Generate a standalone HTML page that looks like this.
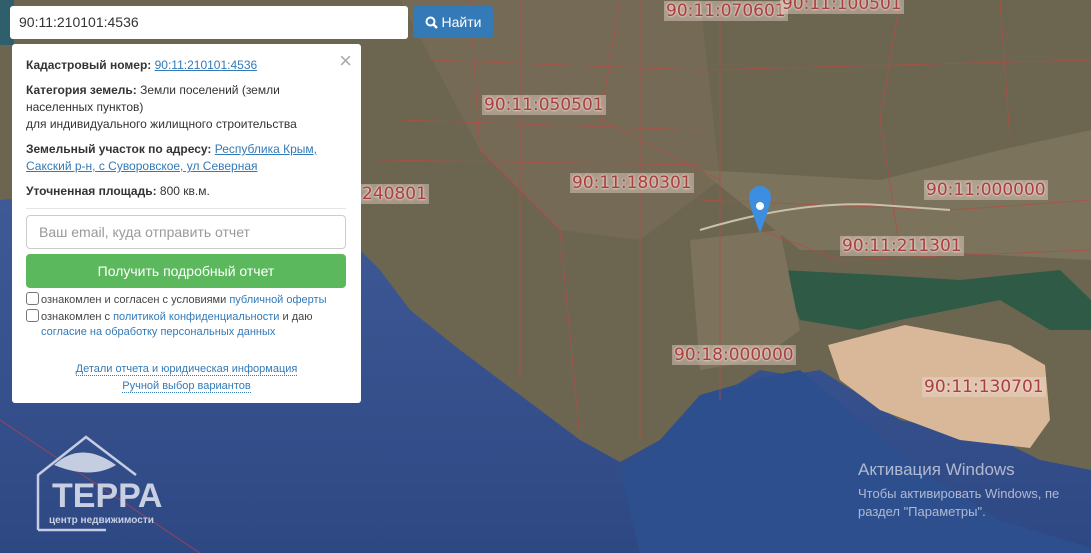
<!DOCTYPE html>
<html><head><meta charset="utf-8"><style>
*{box-sizing:border-box}
body{margin:0;width:1091px;height:553px;overflow:hidden;position:relative;font-family:"Liberation Sans",Arial,sans-serif;background:#3f5b97}
svg.bg{position:absolute;left:0;top:0}
.lbl{position:absolute;font-size:17px;color:#a8403f;font-family:"DejaVu Sans","Liberation Sans",sans-serif;text-shadow:0 0 2px #f0d8d0,0 0 3px #f0d8d0;background:rgba(235,215,205,.45);padding:0 2px;line-height:20px}
.search{position:absolute;left:10px;top:6px;width:398px;height:33px;background:#fff;border-radius:3px;font-size:14px;color:#333;padding:8px 9px}
.btn{position:absolute;left:413px;top:6px;width:80px;height:32px;background:#337ab7;border-radius:3px;color:#fff;font-size:14px;display:flex;align-items:center;justify-content:center;gap:4px}
.panel{position:absolute;left:12px;top:44px;width:349px;height:359px;background:#fff;border-radius:3px;font-size:12px;color:#333;padding:0 14px}
.panel p{margin:0;line-height:17px}
a{color:#337ab7;text-decoration:underline}
.close{position:absolute;right:9px;top:4px;font-size:22px;color:#aaa;font-weight:300}
.email{position:absolute;left:14px;top:171px;width:320px;height:34px;border:1px solid #ccc;border-radius:4px;font-size:14px;color:#999;padding:8px 12px}
.green{position:absolute;left:14px;top:210px;width:320px;height:34px;background:#5cb85c;border-radius:4px;color:#fff;font-size:14px;text-align:center;line-height:34px}
.cb{display:inline-block;width:13px;height:13px;border:1px solid #777;border-radius:3px;vertical-align:-2px;margin-right:2px}
.sm{font-size:11px;color:#444;position:absolute;left:14px}
.sm span{color:#337ab7}
.dl{position:absolute;width:100%;left:0;text-align:center;font-size:11px}
.dl span{color:#337ab7;border-bottom:1px dotted #337ab7}
</style></head><body>
<svg class="bg" width="1091" height="553" viewBox="0 0 1091 553">
<defs><linearGradient id="sea" x1="0" y1="0" x2="0" y2="1"><stop offset="0" stop-color="#4863a0"/><stop offset="1" stop-color="#2e4884"/></linearGradient></defs>
<rect width="1091" height="553" fill="url(#sea)"/>
<polygon fill="#6c6550" points="0,0 1091,0 1091,470 1040,460 1000,440 900,420 820,370 790,375 760,370 720,395 690,410 660,440 620,462 580,440 520,395 460,350 410,310 380,270 340,230 260,200 150,190 60,195 0,200"/>
<polygon fill="#756a55" points="400,0 700,0 720,180 640,240 560,230 480,150"/>
<polygon fill="#7b735b" points="700,170 880,180 1000,150 1091,130 1091,260 900,250 800,250"/>
<polygon fill="#2f5a45" points="780,270 880,275 960,280 1060,270 1091,300 1091,330 1050,330 1000,300 900,320 860,330 800,320"/>
<polygon fill="#7d735c" points="690,240 780,230 800,330 760,360 700,370"/>
<polygon fill="#d8b898" points="828,345 905,325 1010,345 1045,365 1050,420 1030,448 960,440 880,410 840,380"/>
<polygon fill="#2d4f8d" points="700,395 760,378 800,370 860,420 920,470 1000,520 1091,548 1091,553 640,553 620,470 660,440"/>
<rect x="0" y="0" width="14" height="45" fill="#2f5f6a"/>
<g stroke="#b84a45" stroke-width="1" fill="none" opacity=".7">
<path d="M470 0 L480 150 L560 230 M620 0 L600 120 L720 180 M900 0 L880 120 L900 250 M1000 0 L1010 140 M430 60 L700 70 L1091 60 M400 120 L700 130 M700 200 L950 210 L1091 200 M720 0 L720 400 M760 230 L840 260 L1091 250 M380 160 L700 165 M520 0 L520 380 M640 0 L640 440 M560 230 L580 440"/>
<path d="M0 420 L200 553" stroke="#c04048"/>
</g>
<path d="M700 230 Q800 200 880 205 L950 210" stroke="#c8c0a8" stroke-width="2" fill="none"/>
<path d="M749 197 a11 11 0 0 1 22 0 q0 8 -11 36 q-11 -28 -11 -36z" fill="#3c8ee0"/>
<circle cx="760" cy="206" r="4" fill="#fff"/>
</svg>
<div class="lbl" style="left:664px;top:1px">90:11:070601</div>
<div class="lbl" style="left:780px;top:-6px">90:11:100501</div>
<div class="lbl" style="left:482px;top:95px">90:11:050501</div>
<div class="lbl" style="left:570px;top:173px">90:11:180301</div>
<div class="lbl" style="left:360px;top:184px">240801</div>
<div class="lbl" style="left:924px;top:180px">90:11:000000</div>
<div class="lbl" style="left:840px;top:236px">90:11:211301</div>
<div class="lbl" style="left:672px;top:345px">90:18:000000</div>
<div class="lbl" style="left:922px;top:377px">90:11:130701</div>
<div style="position:absolute;left:858px;top:460px;color:rgba(230,230,240,.7);font-size:17px">Активация Windows</div>
<div style="position:absolute;left:858px;top:485px;color:rgba(230,230,240,.7);font-size:13px;line-height:18px">Чтобы активировать Windows, пе<br>раздел "Параметры".</div>
<svg style="position:absolute;left:36px;top:435px" width="145" height="100" viewBox="0 0 145 100">
<path d="M2 95 V40 L50 2 L100 40" stroke="#c5cde0" stroke-width="2.5" fill="none"/>
<path d="M2 95 H70" stroke="#c5cde0" stroke-width="2.5"/>
<path d="M18 30 Q45 5 80 30 Q55 45 18 30z" fill="#c5cde0"/>
<text x="16" y="72" font-family="Liberation Sans" font-weight="bold" font-size="34" fill="#c8d0e2">ТЕРРА</text>
<text x="13" y="88" font-family="Liberation Sans" font-weight="bold" font-size="10" fill="#c8d0e2">центр недвижимости</text>
</svg>
<div class="search">90:11:210101:4536</div>
<div class="btn"><svg width="13" height="13" viewBox="0 0 13 13"><circle cx="5.5" cy="5.5" r="4" stroke="#fff" stroke-width="2" fill="none"/><path d="M8.5 8.5 L12 12" stroke="#fff" stroke-width="2.4"/></svg>Найти</div>
<div class="panel">
<div class="close">×</div>
<p style="position:absolute;top:13px"><b>Кадастровый номер:</b> <a>90:11:210101:4536</a></p>
<p style="position:absolute;top:38px"><b>Категория земель:</b> Земли поселений (земли<br>населенных пунктов)<br>для индивидуального жилищного строительства</p>
<p style="position:absolute;top:97px"><b>Земельный участок по адресу:</b> <a>Республика Крым,<br>Сакский р-н, с Суворовское, ул Северная</a></p>
<p style="position:absolute;top:139px"><b>Уточненная площадь:</b> 800 кв.м.</p>
<div style="position:absolute;left:14px;top:164px;width:320px;border-top:1px solid #e5e5e5"></div>
<div class="email">Ваш email, куда отправить отчет</div>
<div class="green">Получить подробный отчет</div>
<div class="sm" style="top:248px"><i class="cb"></i>ознакомлен и согласен с условиями <span>публичной оферты</span></div>
<div class="sm" style="top:265px"><i class="cb"></i>ознакомлен с <span>политикой конфиденциальности</span> и даю</div>
<div class="sm" style="top:282px;left:29px"><span>согласие на обработку персональных данных</span></div>
<div class="dl" style="top:319px"><span>Детали отчета и юридическая информация</span></div>
<div class="dl" style="top:336px"><span>Ручной выбор вариантов</span></div>
</div>
</body></html>
